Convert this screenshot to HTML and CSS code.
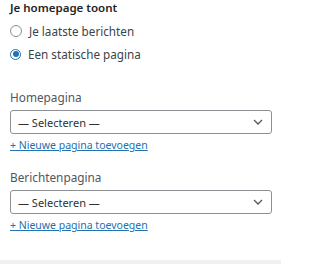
FILE: index.html
```html
<!DOCTYPE html>
<html>
<head>
<meta charset="utf-8">
<link rel="stylesheet" href="styles.css">
</head>
<body>
<div class="panel">
  <fieldset class="group">
    <legend class="heading">Je homepage toont</legend>
    <label class="radio"><span class="dot"></span><span>Je laatste berichten</span></label>
    <label class="radio"><span class="dot checked"></span><span>Een statische pagina</span></label>
  </fieldset>
  <div class="field">
    <div class="label">Homepagina</div>
    <div class="select"><span>— Selecteren —</span>
      <svg class="chev" width="10" height="6" viewBox="0 0 10 6"><path d="M1 1l4 4 4-4" fill="none" stroke="#50575e" stroke-width="1.3"/></svg>
    </div>
    <a class="add" href="#">+ Nieuwe pagina toevoegen</a>
  </div>
  <div class="field">
    <div class="label">Berichtenpagina</div>
    <div class="select"><span>— Selecteren —</span>
      <svg class="chev" width="10" height="6" viewBox="0 0 10 6"><path d="M1 1l4 4 4-4" fill="none" stroke="#50575e" stroke-width="1.3"/></svg>
    </div>
    <a class="add" href="#">+ Nieuwe pagina toevoegen</a>
  </div>
</div>
<div class="footer"></div>
</body>
</html>
```
FILE: styles.css
```css
html, body { margin: 0; padding: 0; }
body {
  width: 281px;
  height: 264px;
  background: #fff;
  font-family: "Noto Sans", "Open Sans", sans-serif;
  font-size: 10.5px;
  color: #3c434a;
  display: flex;
  flex-direction: column;
  overflow: hidden;
}
.panel {
  flex: 1;
  padding: 1px 9px 0 10px;
}
.group {
  border: 0;
  margin: 0;
  padding: 0;
  display: flex;
  flex-direction: column;
}
.heading {
  padding: 0;
  font-weight: 600;
  font-size: 11.5px;
  color: #1d2327;
  line-height: 14px;
  margin-bottom: 9px;
}
.radio {
  display: flex;
  align-items: center;
  gap: 7px;
  height: 14px;
  margin-bottom: 9px;
  font-size: 11.7px;
}
.dot {
  width: 10px;
  height: 10px;
  border: 1px solid #8c8f94;
  border-radius: 50%;
  box-sizing: content-box;
  display: flex;
  align-items: center;
  justify-content: center;
}
.dot.checked { border-color: #2271b1; border-width: 1.5px; width: 9px; height: 9px; }
.dot.checked::after {
  content: "";
  width: 6px;
  height: 6px;
  border-radius: 50%;
  background: #2271b1;
}
.field { margin-top: 20px; }
.field + .field { margin-top: 18px; }
.label {
  color: #50575e;
  font-size: 11.8px;
  line-height: 14px;
  margin-bottom: 6px;
}
.select {
  height: 22px;
  border: 1px solid #8c8f94;
  border-radius: 3px;
  display: flex;
  align-items: center;
  justify-content: space-between;
  padding: 0 8px 0 7px;
  color: #2c3338;
  font-size: 11px;
}
.add {
  display: inline-block;
  margin-top: 4px;
  color: #2271b1;
  text-decoration: underline;
  line-height: 14px;
}
.footer {
  height: 4px;
  background: #f0f0f1;
}
```
